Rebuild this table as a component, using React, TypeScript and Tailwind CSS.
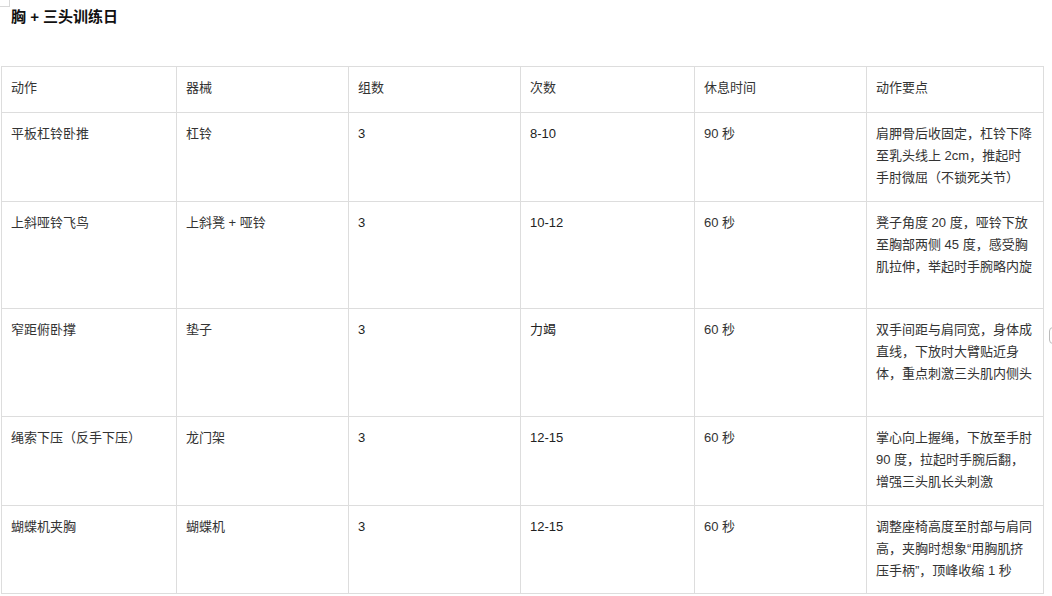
const rows: { name: string; gear: string; sets: string; reps: string; rest: string; tips: string[]; h: string }[] = [
  {
    name: "平板杠铃卧推",
    gear: "杠铃",
    sets: "3",
    reps: "8-10",
    rest: "90 秒",
    tips: ["肩胛骨后收固定，杠铃下降", "至乳头线上 2cm，推起时", "手肘微屈（不锁死关节）"],
    h: "h-[89px]",
  },
  {
    name: "上斜哑铃飞鸟",
    gear: "上斜凳 + 哑铃",
    sets: "3",
    reps: "10-12",
    rest: "60 秒",
    tips: ["凳子角度 20 度，哑铃下放", "至胸部两侧 45 度，感受胸", "肌拉伸，举起时手腕略内旋"],
    h: "h-[107px]",
  },
  {
    name: "窄距俯卧撑",
    gear: "垫子",
    sets: "3",
    reps: "力竭",
    rest: "60 秒",
    tips: ["双手间距与肩同宽，身体成", "直线，下放时大臂贴近身", "体，重点刺激三头肌内侧头"],
    h: "h-[108px]",
  },
  {
    name: "绳索下压（反手下压）",
    gear: "龙门架",
    sets: "3",
    reps: "12-15",
    rest: "60 秒",
    tips: ["掌心向上握绳，下放至手肘", "90 度，拉起时手腕后翻，", "增强三头肌长头刺激"],
    h: "h-[89px]",
  },
  {
    name: "蝴蝶机夹胸",
    gear: "蝴蝶机",
    sets: "3",
    reps: "12-15",
    rest: "60 秒",
    tips: ["调整座椅高度至肘部与肩同", "高，夹胸时想象“用胸肌挤", "压手柄”，顶峰收缩 1 秒"],
    h: "h-[88px]",
  },
];

const headers = ["动作", "器械", "组数", "次数", "休息时间", "动作要点"];

// 单元格统一样式
const cell = "border border-[#dddddd] align-top pl-[9px] pr-[4px] pt-[10px] text-left font-normal";

export default function App() {
  return (
    <div
      className="relative h-[596px] w-[1052px] overflow-hidden bg-white text-[13px] leading-[22px] text-[#333]"
      style={{ fontFamily: '"Liberation Sans", "Noto Sans CJK SC", sans-serif' }}
    >
      {/* 页角标记 */}
      <div className="absolute left-0 top-0 h-[7px] w-[10px] border-b border-r border-[#d8d8d8]" />

      {/* 标题 */}
      <h1 className="pl-[11px] pt-[7px] text-[15px] font-bold leading-[20px] text-[#111]">胸 + 三头训练日</h1>

      {/* 训练表 */}
      <div className="mt-[39px] pl-px">
        <table className="w-[1042px] table-fixed border-collapse">
          <colgroup>
            <col className="w-[175px]" />
            <col className="w-[172px]" />
            <col className="w-[172px]" />
            <col className="w-[174px]" />
            <col className="w-[172px]" />
            <col className="w-[177px]" />
          </colgroup>
          <thead>
            <tr className="h-[46px]">
              {headers.map((t) => (
                <th key={t} className={cell}>
                  {t}
                </th>
              ))}
            </tr>
          </thead>
          <tbody>
            {rows.map((r) => (
              <tr key={r.name} className={r.h}>
                <td className={cell}>{r.name}</td>
                <td className={cell}>{r.gear}</td>
                <td className={cell + " text-[#222]"}>{r.sets}</td>
                <td className={cell + " text-[#222]"}>{r.reps}</td>
                <td className={cell}>{r.rest}</td>
                <td className={cell}>
                  {r.tips.map((l) => (
                    <div key={l} className="whitespace-nowrap">
                      {l}
                    </div>
                  ))}
                </td>
              </tr>
            ))}
          </tbody>
        </table>
      </div>

      {/* 右侧边缘的浮动按钮 */}
      <div className="absolute left-[1049px] top-[327px] h-[17px] w-[12px] rounded-[4px] border border-[#bbbbbb] bg-white" />
    </div>
  );
}
